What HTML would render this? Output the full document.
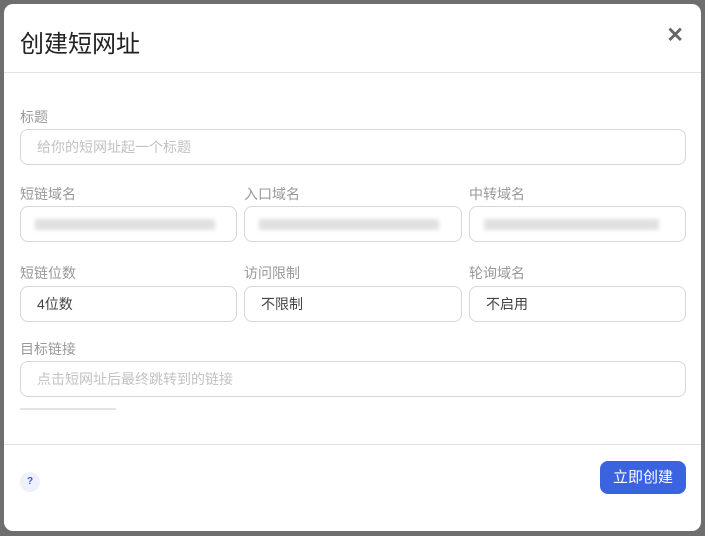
<!DOCTYPE html>
<html><head><meta charset="utf-8"><style>
*{box-sizing:border-box;margin:0;padding:0}
body{width:705px;height:536px;background:#6e6e6e;font-family:"Liberation Sans","Noto Sans CJK SC",sans-serif;position:relative;overflow:hidden}
.modal{position:absolute;left:4px;top:4px;width:697px;height:527px;background:#fff;border-radius:9px;overflow:hidden}
.title{position:absolute;left:16px;top:20px;font-size:24px;color:#222}
.close{position:absolute;right:17px;top:22px;font-size:21px;color:#666;font-weight:bold;line-height:20px}
.hr{position:absolute;left:0;right:0;height:1px;background:#e3e3e3}
.lbl{position:absolute;font-size:14px;color:#999}
.inp{position:absolute;height:36px;border:1px solid #d6d6d6;border-radius:8px;font-size:14px;color:#444;padding-left:16px;line-height:34px}
.ph{color:#c2c2c2}
.blur{position:absolute;left:14px;top:12px;height:11px;background:#ddd;filter:blur(2px);opacity:.9}
.btn{position:absolute;right:15px;top:457px;width:86px;height:33px;background:#3b63e0;color:#fff;border-radius:8px;font-size:15px;text-align:center;line-height:33px}
.q{position:absolute;left:16px;top:468px;width:20px;height:20px;border-radius:50%;background:#eef0fb;color:#3b5bd0;font-size:10px;font-weight:bold;text-align:center;line-height:20px}
</style></head><body>
<div class="modal">
<div class="title">创建短网址</div>
<div class="close">✕</div>
<div class="hr" style="top:68px"></div>
<div class="lbl" style="left:16px;top:103px">标题</div>
<div class="inp" style="left:16px;top:125px;width:666px"><span class="ph">给你的短网址起一个标题</span></div>

<div class="lbl" style="left:16px;top:180px">短链域名</div>
<div class="lbl" style="left:240px;top:180px">入口域名</div>
<div class="lbl" style="left:465px;top:180px">中转域名</div>
<div class="inp" style="left:16px;top:202px;width:217px"><div class="blur" style="width:180px"></div></div>
<div class="inp" style="left:240px;top:202px;width:218px"><div class="blur" style="width:180px"></div></div>
<div class="inp" style="left:465px;top:202px;width:217px"><div class="blur" style="width:175px"></div></div>

<div class="lbl" style="left:16px;top:259px">短链位数</div>
<div class="lbl" style="left:240px;top:259px">访问限制</div>
<div class="lbl" style="left:465px;top:259px">轮询域名</div>
<div class="inp" style="left:16px;top:282px;width:217px">4位数</div>
<div class="inp" style="left:240px;top:282px;width:218px">不限制</div>
<div class="inp" style="left:465px;top:282px;width:217px">不启用</div>

<div class="lbl" style="left:16px;top:335px">目标链接</div>
<div class="inp" style="left:16px;top:357px;width:666px"><span class="ph">点击短网址后最终跳转到的链接</span></div>
<div style="position:absolute;left:16px;top:404px;width:96px;height:2px;background:#e4e4e4"></div>

<div class="hr" style="top:440px"></div>
<div class="q">?</div>
<div class="btn">立即创建</div>
</div>
</body></html>
